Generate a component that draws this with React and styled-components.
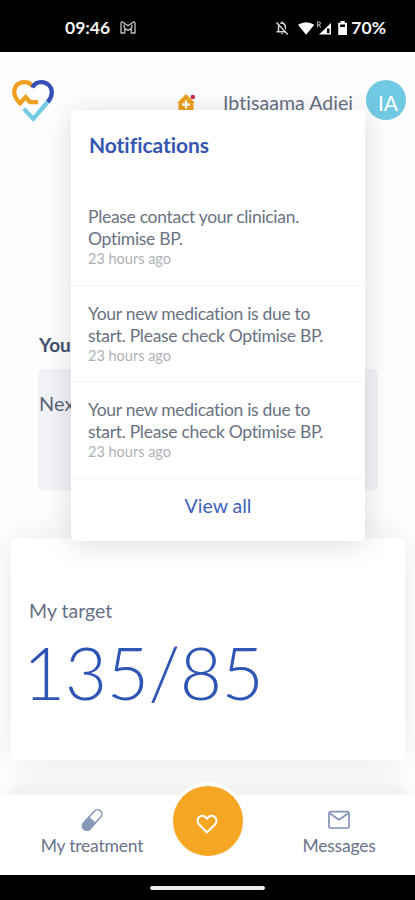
import React from 'react'
import styled, { createGlobalStyle } from 'styled-components'

const notifications = [
  { id: 1, lines: ['Please contact your clinician.', 'Optimise BP.'], time: '23 hours ago' },
  { id: 2, lines: ['Your new medication is due to', 'start. Please check Optimise BP.'], time: '23 hours ago' },
  { id: 3, lines: ['Your new medication is due to', 'start. Please check Optimise BP.'], time: '23 hours ago' },
]

function StatusBar() {
  return (
    <Status>
      <StatusGroup $gap="11px">
        <Clock>09:46</Clock>
        <svg width="16" height="13" viewBox="0 0 16 13" fill="none" stroke="#c4c4c4" strokeWidth="1.3" strokeLinejoin="round">
          <path d="M1 2.2 Q1 .8 2.6 1 L8 4.8 L13.4 1 Q15 .8 15 2.2 V12 H11.2 V7.2 L8 9.5 L4.8 7.2 V12 H1 Z" />
          <path d="M4.2 3.5 V7 M11.8 3.5 V7" />
        </svg>
      </StatusGroup>
      <StatusGroup>
        <svg width="77" height="18" viewBox="0 0 77 18" fill="none">
          <path d="M4.5 12.5 V8 Q4.7 4.6 8 4 Q11.2 4.6 11.4 8 V12.5 M2.5 12.7 H13 M8 2.5 V4" stroke="#d5d5d5" strokeWidth="1.5" />
          <path d="M6.8 14 H9.4 L8 15.4 Z" fill="#d5d5d5" />
          <path d="M4 3 L15 15" stroke="#000" strokeWidth="1.6" />
          <path d="M2.5 3.5 L13.8 15.5" stroke="#d5d5d5" strokeWidth="1.5" />
          <path d="M24 5.8 Q32 .8 40.3 5.8 L32.1 15.8 Z" fill="#fff" />
          <path d="M57 4 V15.6 H45 Z" fill="#fff" />
          <path d="M53 9.5 H55.5 V14.2 H53 Z" fill="#000" />
          <path d="M43.5 8.5 V3 H45.5 Q47.3 4.3 45.5 5.7 H43.7 M45 5.8 L47 8.5" stroke="#aaa" strokeWidth="1.1" />
          <path d="M66.5 3.8 V2 H70.7 V3.8 H73 V16 H64.2 V3.8 Z" fill="#fff" />
          <path d="M66.2 5.5 H71 V8 H66.2 Z" fill="#000" />
        </svg>
        <Battery>70%</Battery>
      </StatusGroup>
    </Status>
  )
}

function Logo() {
  return (
    <svg width="44" height="44" viewBox="0 0 44 44" fill="none" strokeWidth="4.3">
      <path d="M12.8 29.6 L22.2 39.8 L38 21.5" stroke="#72cbe3" />
      <path d="M22 7.6 C16.5 .2 4 2.2 3.2 12.5 C3 17 5.5 20.6 9 24.2 L14.7 18.2 L19 23.2 H27" stroke="#efa01f" />
      <path d="M21.2 8.4 C26.5 -.2 40 2 40.8 12.8 C41 16.7 39.5 19.7 36.8 22.8" stroke="#3650b5" />
    </svg>
  )
}

function HomeIcon() {
  return (
    <svg width="20" height="22" viewBox="0 0 20 22">
      <path d="M1 9.5 L9 1.5 L17 9.5 L16 10.5 V18 H2 V10.5 Z" fill="#efa01f" stroke="#efa01f" strokeLinejoin="round" />
      <path d="M9 7.5 V15.5 M5 11.5 H13" stroke="#fff" strokeWidth="2.3" />
      <circle cx="15.8" cy="4" r="2.2" fill="#c9283f" />
    </svg>
  )
}

function NotificationsPopup() {
  return (
    <Popup>
      <PopupTitle>Notifications</PopupTitle>
      {notifications.map(item => (
        <Notification key={item.id}>
          {item.lines.map(line => <Line key={line}>{line}</Line>)}
          <Time>{item.time}</Time>
        </Notification>
      ))}
      <ViewAll>View all</ViewAll>
    </Popup>
  )
}

function BottomNav() {
  return (
    <Nav>
      <NavItem $width="130px">
        <svg width="26" height="26" viewBox="0 0 26 26" fill="none">
          <g transform="rotate(42 13 13)">
            <rect x="8.8" y="0.6" width="8.6" height="24.4" rx="4.3" stroke="#8799b9" strokeWidth="1.6" />
            <path d="M8 12.5 H18.2 V20.8 A5.1 5.1 0 0 1 8 20.8 Z" fill="#8799b9" />
          </g>
        </svg>
        <NavLabel>My treatment</NavLabel>
      </NavItem>
      <HeartButton>
        <svg width="24" height="22" viewBox="0 0 24 22" fill="none" stroke="#fff" strokeWidth="2" strokeLinejoin="round">
          <path d="M12 19.5 L4.3 11.7 C1.7 9 2.2 5 5 3.4 C7.6 2 10.4 3.2 12 5.8 C13.6 3.2 16.4 2 19 3.4 C21.8 5 22.3 9 19.7 11.7 Z" />
        </svg>
      </HeartButton>
      <NavItem $width="98px">
        <svg width="26" height="26" viewBox="0 0 26 26" fill="none" stroke="#8393b7" strokeWidth="1.7" strokeLinejoin="round">
          <rect x="3" y="4.6" width="20" height="16.4" rx="1.8" />
          <path d="M4 6.5 L13 12.8 L22 6.5" />
        </svg>
        <NavLabel>Messages</NavLabel>
      </NavItem>
    </Nav>
  )
}

function App() {
  return (
    <>
      <GlobalStyle />
      <Screen>
        <StatusBar />
        <Content>
          <Header>
            <Logo />
            <User>
              <HomeIcon />
              <UserName>Ibtisaama Adjei</UserName>
              <Avatar>IA</Avatar>
            </User>
          </Header>
          <SectionTitle>Your</SectionTitle>
          <NextBox>Next</NextBox>
          <TargetCard>
            <TargetLabel>My target</TargetLabel>
            <TargetValue>135/85</TargetValue>
          </TargetCard>
          <NextCard />
        </Content>
        <BottomNav />
        <GestureBar>
          <Handle />
        </GestureBar>
        <NotificationsPopup />
      </Screen>
    </>
  )
}

export default App

const GlobalStyle = createGlobalStyle`
  * {
    box-sizing: border-box;
  }
  body {
    margin: 0;
    background: #fefefe;
    font-family: 'Lato', sans-serif;
  }
  svg {
    flex-shrink: 0;
  }
`

const Screen = styled.div`
  position: relative;
  display: flex;
  flex-direction: column;
  width: 415px;
  height: 900px;
  overflow: hidden;
`

const Status = styled.div`
  display: flex;
  flex-shrink: 0;
  justify-content: space-between;
  height: 52px;
  padding: 3px 29px 0 65px;
  background: #000;
  color: #f3f3f3;
`

const StatusGroup = styled.div`
  display: flex;
  align-items: center;
  gap: ${({ $gap }) => $gap || '0'};
`

const Clock = styled.div`
  width: 44px;
  font-size: 17.5px;
  font-weight: 700;
  white-space: nowrap;
`

const Battery = styled.div`
  font-size: 17.5px;
  font-weight: 700;
  white-space: nowrap;
`

const Content = styled.div`
  display: flex;
  flex-direction: column;
  height: 743px;
  overflow: hidden;
`

const Header = styled.div`
  display: flex;
  flex-shrink: 0;
  align-items: flex-start;
  justify-content: space-between;
  height: 100px;
  padding: 27px 9px 0 11px;
`

const User = styled.div`
  display: flex;
  align-items: center;
  margin-top: 1px;

  svg {
    margin-top: 8px;
  }
`

const UserName = styled.div`
  margin: 6px 13px 0 26px;
  color: #667085;
  font-size: 19.5px;
  line-height: 24px;
  letter-spacing: 0.05px;
  white-space: nowrap;
`

const Avatar = styled.div`
  display: flex;
  align-items: center;
  justify-content: center;
  width: 40px;
  height: 40px;
  padding: 5px 0 0 4px;
  border-radius: 50%;
  background: #72c9e4;
  color: #fff;
  font-size: 21px;
`

const SectionTitle = styled.div`
  flex-shrink: 0;
  margin: 180px 0 0 39px;
  color: #42506d;
  font-size: 19px;
  font-weight: 700;
  line-height: 26px;
`

const NextBox = styled.div`
  flex-shrink: 0;
  width: 340px;
  height: 121px;
  margin: 11px 0 0 38px;
  padding: 21px 1px;
  border-radius: 4px;
  background: #f1f3f6;
  color: #5c667b;
  font-size: 20px;
  line-height: 26px;
`

const TargetCard = styled.div`
  flex-shrink: 0;
  width: 394px;
  height: 222px;
  margin: 48px 0 0 11px;
  padding: 60px 15px 0 18px;
  border-radius: 6px;
  background: #fff;
  box-shadow: 0 0 36px rgba(0, 0, 0, 0.09);
`

const TargetLabel = styled.div`
  color: #667084;
  font-size: 19.5px;
  line-height: 26px;
`

const TargetValue = styled.div`
  margin: 3px 0 0 -6px;
  color: #2f55b5;
  font-size: 73px;
  font-weight: 300;
  line-height: 90px;
  letter-spacing: -0.5px;
`

const NextCard = styled.div`
  flex-shrink: 0;
  width: 394px;
  height: 80px;
  margin: 26px 0 0 11px;
  border-radius: 6px;
  background: #f3f3f3;
  box-shadow: 0 0 30px rgba(0, 0, 0, 0.07);
`

const Nav = styled.div`
  z-index: 1;
  display: flex;
  flex-shrink: 0;
  height: 80px;
  padding: 0 27px;
  background: #fff;
`

const NavItem = styled.div`
  display: flex;
  flex-direction: column;
  align-items: center;
  width: ${({ $width }) => $width};
  padding-top: 12px;

  &:last-child {
    margin-left: auto;
  }
`

const NavLabel = styled.div`
  color: #69738a;
  font-size: 17.5px;
  line-height: 25px;
  letter-spacing: -0.2px;
  white-space: nowrap;
`

const HeartButton = styled.div`
  display: flex;
  align-items: center;
  justify-content: center;
  width: 78px;
  height: 78px;
  margin: -13px 0 0 12px;
  padding: 6px 2px 0 0;
  border: 4px solid #fff;
  border-radius: 50%;
  background: #f5a623;
`

const GestureBar = styled.div`
  display: flex;
  flex-shrink: 0;
  align-items: center;
  justify-content: center;
  height: 25px;
  background: #000;
`

const Handle = styled.div`
  width: 115px;
  height: 4px;
  border-radius: 2px;
  background: #eee;
`

const Popup = styled.div`
  position: absolute;
  top: 110px;
  left: 71px;
  z-index: 2;
  width: 294px;
  height: 431px;
  border-radius: 5px;
  background: #fff;
  box-shadow: 0 3px 30px rgba(0, 0, 0, 0.14);
`

const PopupTitle = styled.div`
  height: 79px;
  padding: 22px 18px 0;
  color: #3555b0;
  font-size: 21px;
  font-weight: 700;
  line-height: 26px;
  letter-spacing: -0.05px;
`

const Notification = styled.div`
  height: 96.5px;
  padding: 17px 17px 0;
  border-bottom: 1px solid #f2f3f5;
`

const Line = styled.div`
  color: #697282;
  font-size: 17.5px;
  line-height: 22px;
  letter-spacing: -0.3px;
  white-space: nowrap;
`

const Time = styled.div`
  color: #aeb1b6;
  font-size: 14.5px;
  line-height: 18px;
`

const ViewAll = styled.div`
  padding-top: 14px;
  color: #3f63b8;
  font-size: 19.5px;
  line-height: 26px;
  text-align: center;
`
